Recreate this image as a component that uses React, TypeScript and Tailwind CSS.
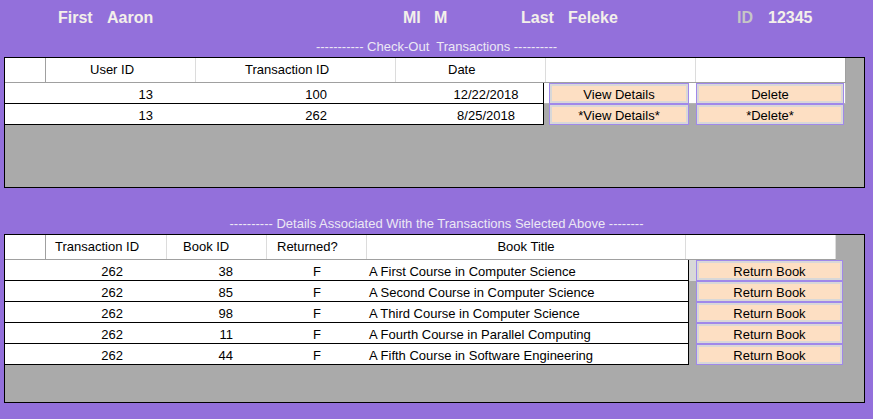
import React from "react";

interface Checkout {
  userId: number;
  transactionId: number;
  date: string;
  view: string;
  del: string;
}

interface Detail {
  transactionId: number;
  bookId: number;
  returned: string;
  title: string;
}

const checkouts: Checkout[] = [
  { userId: 13, transactionId: 100, date: "12/22/2018", view: "View Details", del: "Delete" },
  { userId: 13, transactionId: 262, date: "8/25/2018", view: "*View Details*", del: "*Delete*" },
];

const details: Detail[] = [
  { transactionId: 262, bookId: 38, returned: "F", title: "A First Course in Computer Science" },
  { transactionId: 262, bookId: 85, returned: "F", title: "A Second Course in Computer Science" },
  { transactionId: 262, bookId: 98, returned: "F", title: "A Third Course in Computer Science" },
  { transactionId: 262, bookId: 11, returned: "F", title: "A Fourth Course in Parallel Computing" },
  { transactionId: 262, bookId: 44, returned: "F", title: "A Fifth Course in Software Engineering" },
];

function FormButton({ label, width }: { label: string; width: string }) {
  return (
    <div
      className={`${width} h-[21px] shrink-0 border border-[#a088ea] bg-[#fddfc3] shadow-[inset_0_0_0_2px_#d8d8d8] pt-[2px] text-center leading-[17px]`}
    >
      {label}
    </div>
  );
}

export default function App() {
  return (
    <div className="w-[873px] h-[419px] overflow-hidden bg-[#9370db] font-['Liberation_Sans',Arial,sans-serif] text-[13px] text-black">
      {/* Name bar */}
      <div className="flex pt-[9px] pl-[58px] text-[16px] leading-[18px] font-bold text-[#f3f0ea]">
        <span className="w-[49px]">First</span>
        <span className="w-[296px]">Aaron</span>
        <span className="w-[31px]">MI</span>
        <span className="w-[87px]">M</span>
        <span className="w-[47px]">Last</span>
        <span className="w-[169px]">Feleke</span>
        <span className="w-[31px] text-[#c6c6c6]">ID</span>
        <span>12345</span>
      </div>

      <div className="mt-[12px] h-[15px] whitespace-pre text-center leading-[15px] text-[#ece8f4]">
        {"----------- Check-Out  Transactions ----------"}
      </div>

      {/* Check-out transactions */}
      <div className="mt-[3px] ml-[4px] w-[861px] h-[131px] border border-black bg-[#aaaaaa]">
        <div className="flex h-[25px] w-[841px] bg-white border-b border-[#a0a0a0] leading-[24px]">
          <div className="w-[41px] border-r border-[#a0a0a0]" />
          <div className="w-[150px] border-r border-[#dcdcdc] pl-[44px]">User ID</div>
          <div className="w-[200px] border-r border-[#dcdcdc] pl-[49px]">Transaction ID</div>
          <div className="w-[150px] border-r border-[#dcdcdc] pl-[52px]">Date</div>
          <div className="w-[150px] border-r border-[#dcdcdc]" />
          <div className="w-[150px] border-r border-[#a0a0a0]" />
        </div>
        {checkouts.map((row, i) => (
          <div className="flex" key={i}>
            <div className="flex w-[539px] h-[21px] shrink-0 bg-white border-r border-b border-black pt-[3px] leading-[17px]">
              <div className="w-[148px] text-right">{row.userId}</div>
              <div className="w-[174px] text-right">{row.transactionId}</div>
              <div className="w-[103px]" />
              <div className="w-[112px] text-center">{row.date}</div>
            </div>
            <div
              className={`flex w-[302px] h-[21px] pl-[5px] gap-[7px] ${
                i === 0 ? "bg-white border-r border-b border-[#b4b4b4]" : ""
              }`}
            >
              <FormButton label={row.view} width="w-[140px]" />
              <FormButton label={row.del} width="w-[148px]" />
            </div>
          </div>
        ))}
      </div>

      <div className="mt-[28px] h-[15px] whitespace-pre text-center leading-[15px] text-[#ece8f4]">
        {"---------- Details Associated With the Transactions Selected Above --------"}
      </div>

      {/* Transaction details */}
      <div className="mt-[3px] ml-[4px] w-[861px] h-[169px] border border-black bg-[#aaaaaa]">
        <div className="flex h-[25px] w-[831px] bg-white border-b border-[#a0a0a0] leading-[24px]">
          <div className="w-[41px] border-r border-[#a0a0a0]" />
          <div className="w-[121px] border-r border-[#dcdcdc] pl-[9px]">Transaction ID</div>
          <div className="w-[100px] border-r border-[#dcdcdc] pl-[16px]">Book ID</div>
          <div className="w-[100px] border-r border-[#dcdcdc] pl-[10px]">Returned?</div>
          <div className="w-[319px] border-r border-[#dcdcdc] text-center">Book Title</div>
          <div className="w-[150px] border-r border-[#dcdcdc]" />
        </div>
        {details.map((row, i) => (
          <div className="flex" key={i}>
            <div className="flex w-[684px] h-[21px] shrink-0 bg-white border-r border-b border-black pt-[3px] leading-[17px]">
              <div className="w-[118px] text-right">{row.transactionId}</div>
              <div className="w-[110px] text-right">{row.bookId}</div>
              <div className="w-[64px]" />
              <div className="w-[40px] text-center">{row.returned}</div>
              <div className="w-[32px]" />
              <div className="flex-1 whitespace-nowrap">{row.title}</div>
            </div>
            <div className={`w-[7px] h-[21px] ${i === 0 ? "bg-[#d8d8d8]" : ""}`} />
            <FormButton label="Return Book" width="w-[147px]" />
          </div>
        ))}
      </div>
    </div>
  );
}
